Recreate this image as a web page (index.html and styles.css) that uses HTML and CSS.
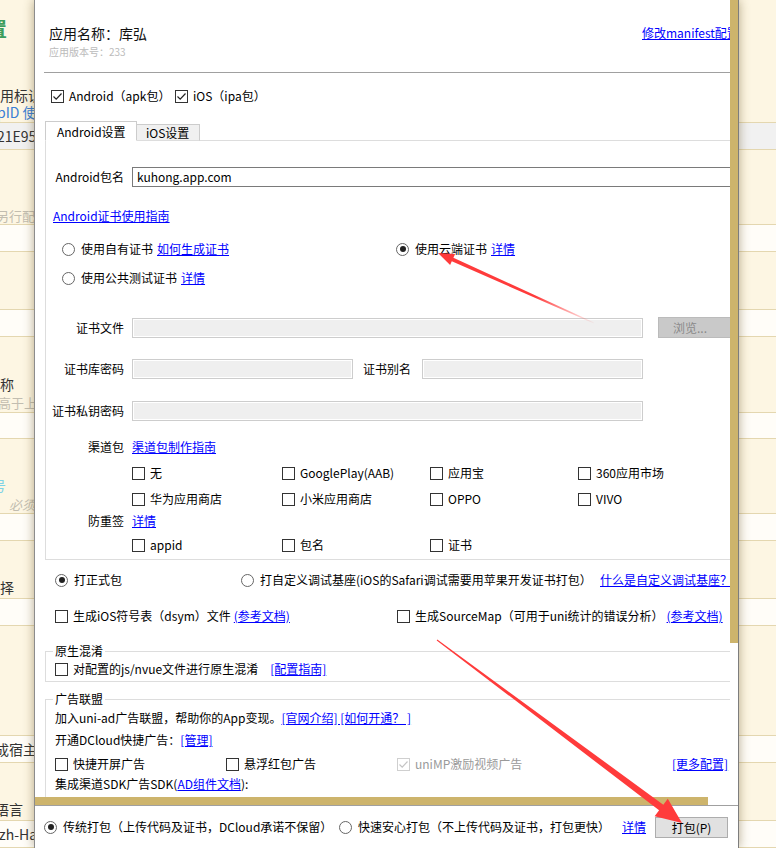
FILE: index.html
```html
<!DOCTYPE html>
<html lang="zh-CN">

<head>
  <meta charset="UTF-8">
  <meta name="viewport" content="width=device-width, initial-scale=1.0">
  <title>App云端打包</title>
  <link rel="stylesheet" href="styles.css">
</head>

<body>
  <!-- manifest page behind the dialog -->
  <div class="page">
    <h2 class="pg-title">置</h2>
    <p class="pg-text pg-appid">用标识</p>
    <p class="pg-text pg-use">pID 使用</p>
    <div class="pg-input pg-input-gray pg-in1">21E954</div>
    <p class="pg-hint pg-h1">另行配置</p>
    <div class="pg-input pg-in2"></div>
    <div class="pg-input pg-in3"></div>
    <p class="pg-text pg-name">称</p>
    <p class="pg-hint pg-h2">高于上</p>
    <div class="pg-input pg-in4"></div>
    <p class="pg-mark">号</p>
    <p class="pg-hint pg-h3">必须</p>
    <div class="pg-input pg-in5"></div>
    <p class="pg-text pg-pick">择</p>
    <div class="pg-input pg-in6"></div>
    <div class="pg-input pg-in7">成宿主</div>
    <p class="pg-text pg-lang">语言</p>
    <div class="pg-input pg-in8">zh-Hans</div>
  </div>

  <div class="dialog">
    <div class="dlg-body">
      <div class="dlg-view">
        <div class="content">
          <div class="app-head">
            <div>
              <div class="app-name">应用名称：库弘</div>
              <div class="app-ver">应用版本号：233</div>
            </div>
            <a href="#">修改manifest配置</a>
          </div>
          <div class="rule"></div>

          <div class="platforms">
            <label class="chk"><span class="box"><svg width="11" height="11" viewBox="0 0 11 11"><path d="M1.5 5.5 4.2 8.2 9.5 2.5" fill="none" stroke="#222" stroke-width="1.2"/></svg></span>Android（apk包）</label>
            <label class="chk"><span class="box"><svg width="11" height="11" viewBox="0 0 11 11"><path d="M1.5 5.5 4.2 8.2 9.5 2.5" fill="none" stroke="#222" stroke-width="1.2"/></svg></span>iOS（ipa包）</label>
          </div>

          <div class="tabs">
            <div class="tab active">Android设置</div>
            <div class="tab">iOS设置</div>
          </div>

          <div class="panel">
            <div class="frow r-pkg">
              <span class="flabel">Android包名</span>
              <div class="txt-input">kuhong.app.com</div>
            </div>

            <div class="r-guide"><a href="#">Android证书使用指南</a></div>

            <div class="r-cert">
              <div class="rad"><span class="radio"></span><span>使用自有证书</span><a href="#">如何生成证书</a></div>
              <div class="rad"><span class="radio on"></span><span>使用云端证书</span><a href="#">详情</a></div>
            </div>
            <div class="r-cert r-cert2">
              <div class="rad"><span class="radio"></span><span>使用公共测试证书</span><a href="#">详情</a></div>
            </div>

            <div class="frow r-file">
              <span class="flabel">证书文件</span>
              <div class="fcell">
                <div class="dis-input w-long"></div>
                <div class="browse">浏览...</div>
              </div>
            </div>
            <div class="frow r-pw">
              <span class="flabel">证书库密码</span>
              <div class="fcell">
                <div class="dis-input w-half"></div>
                <span class="alias-label">证书别名</span>
                <div class="dis-input w-half"></div>
              </div>
            </div>
            <div class="frow r-pw">
              <span class="flabel">证书私钥密码</span>
              <div class="fcell">
                <div class="dis-input w-long"></div>
              </div>
            </div>

            <div class="frow r-chan">
              <span class="flabel">渠道包</span>
              <div><a href="#">渠道包制作指南</a></div>
            </div>
            <div class="r-grid">
              <label class="chk"><span class="box"></span>无</label>
              <label class="chk"><span class="box"></span>GooglePlay(AAB)</label>
              <label class="chk"><span class="box"></span>应用宝</label>
              <label class="chk"><span class="box"></span>360应用市场</label>
            </div>
            <div class="r-grid">
              <label class="chk"><span class="box"></span>华为应用商店</label>
              <label class="chk"><span class="box"></span>小米应用商店</label>
              <label class="chk"><span class="box"></span>OPPO</label>
              <label class="chk"><span class="box"></span>VIVO</label>
            </div>

            <div class="frow r-sign">
              <span class="flabel">防重签</span>
              <div><a href="#">详情</a></div>
            </div>
            <div class="r-grid r-grid-last">
              <label class="chk"><span class="box"></span>appid</label>
              <label class="chk"><span class="box"></span>包名</label>
              <label class="chk"><span class="box"></span>证书</label>
            </div>
          </div>

          <div class="build">
            <div class="rad"><span class="radio on"></span><span>打正式包</span></div>
            <div class="rad"><span class="radio"></span><span>打自定义调试基座(iOS的Safari调试需要用苹果开发证书打包）</span></div>
            <a href="#">什么是自定义调试基座？</a>
          </div>

          <div class="extras">
            <div class="extra-item tight"><label class="chk"><span class="box"></span>生成iOS符号表（dsym）文件</label><a href="#">(参考文档)</a></div>
            <div class="extra-item tight"><label class="chk"><span class="box"></span>生成SourceMap（可用于uni统计的错误分析）</label><a href="#">(参考文档)</a></div>
          </div>

          <fieldset class="group fs-obf">
            <legend>原生混淆</legend>
            <div class="extra-item"><label class="chk"><span class="box"></span>对配置的js/nvue文件进行原生混淆</label><a href="#">[配置指南]</a></div>
          </fieldset>

          <fieldset class="group fs-ad">
            <legend>广告联盟</legend>
            <div class="ad-row">加入uni-ad广告联盟，帮助你的App变现。<a href="#">[官网介绍] [如何开通？ ]</a></div>
            <div class="ad-row ad-manage">开通DCloud快捷广告：<a href="#">[管理]</a></div>
            <div class="ad-row ad-opts">
              <label class="chk"><span class="box"></span>快捷开屏广告</label>
              <label class="chk"><span class="box"></span>悬浮红包广告</label>
              <label class="chk disabled"><span class="box"><svg width="11" height="11" viewBox="0 0 11 11"><path d="M1.5 5.5 4.2 8.2 9.5 2.5" fill="none" stroke="#c4c4c4" stroke-width="1.2"/></svg></span>uniMP激励视频广告</label>
              <a href="#">[更多配置]</a>
            </div>
            <div class="ad-row ad-sdk">集成渠道SDK广告SDK(<a href="#">AD组件文档</a>):</div>
          </fieldset>
        </div>
      </div>
      <div class="vbar"><div class="vbar-thumb"></div></div>
    </div>
    <div class="hbar"><div class="hbar-thumb"></div></div>

    <div class="dlg-foot">
      <div class="rad"><span class="radio on"></span><span>传统打包（上传代码及证书，DCloud承诺不保留）</span></div>
      <div class="rad"><span class="radio"></span><span>快速安心打包（不上传代码及证书，打包更快）</span></div>
      <a href="#">详情</a>
      <button class="pack-btn">打包(P)</button>
    </div>
  </div>

  <svg class="arrows" width="776" height="848" viewBox="0 0 776 848">
    <defs>
      <linearGradient id="fade1" gradientUnits="userSpaceOnUse" x1="596" y1="324" x2="535" y2="297">
        <stop offset="0" stop-color="#ff3b3b" stop-opacity="0" />
        <stop offset="1" stop-color="#ff3b3b" />
      </linearGradient>
    </defs>
    <polygon fill="url(#fade1)" points="594.2,322.6 453.4,257.7 455.1,254 438,253 450.1,265 451.8,261.3 593.8,323.4" />
    <polygon fill="#ff3b3b" points="437.3,639.6 663.3,804.7 667.8,798.7 682,823 654.6,816.3 659.1,810.3 436.7,640.4" />
  </svg>
</body>

</html>
```

FILE: styles.css
```css
* {
  box-sizing: border-box;
}

body {
  margin: 0;
  width: 776px;
  height: 848px;
  overflow: hidden;
  position: relative;
  background-color: #fdf6e3;
  font-family: "Noto Sans CJK SC", sans-serif;
  font-size: 12px;
  line-height: 16px;
  color: #000;
}

a {
  color: #0000ff;
  text-decoration: underline;
}

/* ---- page behind the dialog ---- */

.page > * {
  margin: 0;
  white-space: nowrap;
}

.pg-title {
  margin-top: 19px;
  height: 20px;
  font-size: 20px;
  line-height: 20px;
  font-weight: bold;
  color: #3c9d5d;
  text-indent: -13px;
}

.pg-text {
  height: 15px;
  font-size: 14px;
  line-height: 15px;
  color: #333;
}

.pg-hint {
  height: 13px;
  font-size: 13px;
  line-height: 13px;
  color: #c2bdb0;
}

.pg-input {
  height: 28px;
  border-top: 1px solid #e4d7b0;
  border-bottom: 1px solid #e4d7b0;
  background-color: #fffdf8;
  font-size: 14px;
  line-height: 26px;
  color: #333;
}

.pg-input-gray {
  background-color: #f1f1f1;
}

.pg-mark {
  height: 14px;
  font-size: 14px;
  line-height: 14px;
  color: #7fd3e6;
  text-indent: -8px;
}

.pg-appid { margin-top: 49px; }
.pg-use { margin-top: 2px; color: #3a7fd5; text-indent: -3px; }
.pg-in1 { margin-top: 2px; text-indent: -3px; }
.pg-h1 { margin-top: 59px; height: 14px; text-indent: -4px; }
.pg-in2 { margin-top: 1px; }
.pg-in3 { margin-top: 57px; }
.pg-name { margin-top: 40px; }
.pg-h2 { margin-top: 4px; text-indent: -2px; }
.pg-in4 { margin-top: 3px; height: 27px; }
.pg-mark { margin-top: 39px; }
.pg-h3 { margin-top: 6px; padding-left: 9px; font-style: italic; }
.pg-in5 { margin-top: 2px; }
.pg-pick { margin-top: 39px; }
.pg-in6 { margin-top: 3px; }
.pg-in7 { margin-top: 109px; text-indent: -5px; }
.pg-lang { margin-top: 39px; text-indent: -5px; }
.pg-in8 { margin-top: 3px; text-indent: -1px; }

/* ---- dialog ---- */

.dialog {
  position: absolute;
  top: 0;
  left: 34px;
  width: 705px;
  height: 848px;
  background-color: #fff;
  border-left: 1px solid #8c8c8c;
  border-right: 1px solid #7d7d7d;
  box-shadow: 0 0 10px rgba(90, 70, 20, 0.45);
  display: flex;
  flex-direction: column;
}

.dlg-body {
  display: flex;
  height: 797px;
}

.dlg-view {
  width: 695px;
  overflow: hidden;
}

.vbar {
  width: 8px;
  background-color: #fff;
}

.vbar-thumb {
  height: 643px;
  background-color: #cdb46c;
}

.hbar {
  height: 8px;
  background-color: #fff;
}

.hbar-thumb {
  width: 673px;
  height: 8px;
  background-color: #cdb46c;
}

.content {
  width: 760px;
  white-space: nowrap;
}

.app-head {
  display: grid;
  grid-template-columns: 593px auto;
  padding: 25px 0 0 14px;
}

.app-name {
  font-size: 14px;
  line-height: 16px;
  color: #111;
}

.app-ver {
  margin-top: 6px;
  font-size: 10px;
  line-height: 10px;
  color: #bbb;
}

.rule {
  margin: 15px 0 0 9px;
  height: 1px;
  background-color: #a0a0a0;
}

/* checkbox + radio */

.chk {
  display: flex;
  align-items: center;
  height: 16px;
}

.box {
  width: 13px;
  height: 13px;
  margin-right: 5px;
  border: 1px solid #333;
  background-color: #fff;
  display: flex;
  align-items: center;
  justify-content: center;
  flex: none;
}

.chk.disabled {
  color: #9a9a9a;
}

.chk.disabled .box {
  border-color: #cfcfcf;
}

.rad {
  display: flex;
  align-items: center;
  height: 16px;
}

.radio {
  width: 13px;
  height: 13px;
  margin-right: 6px;
  border: 1px solid #666;
  border-radius: 50%;
  background-color: #fff;
  display: flex;
  align-items: center;
  justify-content: center;
  flex: none;
}

.radio.on::after {
  content: "";
  width: 6px;
  height: 6px;
  border-radius: 50%;
  background-color: #222;
}

.rad a {
  margin-left: 4px;
}

.platforms {
  display: grid;
  grid-template-columns: 124px auto;
  margin-top: 15px;
  padding-left: 16px;
}

/* tabs */

.tabs {
  display: flex;
  align-items: flex-end;
  height: 20px;
  margin: 17px 0 -1px 10px;
  position: relative;
  z-index: 1;
}

.tab {
  height: 17px;
  width: 63px;
  padding-left: 9px;
  border: 1px solid #ccc;
  border-bottom-color: #ddd;
  border-left: none;
  background-color: #f0f0f0;
  line-height: 15px;
}

.tab.active {
  height: 20px;
  width: 92px;
  padding: 2px 0 0 11px;
  border-left: 1px solid #ccc;
  border-bottom-color: #fff;
  background-color: #fff;
}

.panel {
  margin-left: 10px;
  width: 750px;
  border: 1px solid #ddd;
  border-right: none;
  padding-bottom: 6px;
}

.frow {
  display: grid;
  grid-template-columns: 78px auto;
  column-gap: 8px;
  align-items: center;
  height: 16px;
}

.flabel {
  text-align: right;
}

.fcell {
  display: flex;
  align-items: center;
}

.r-pkg {
  margin-top: 26px;
  height: 20px;
}

.txt-input {
  height: 20px;
  width: 620px;
  padding-left: 4px;
  border: 1px solid #7a7a7a;
  border-right: none;
  line-height: 18px;
}

.r-guide {
  margin-top: 21px;
  padding-left: 7px;
  height: 16px;
}

.r-cert {
  display: grid;
  grid-template-columns: 334px auto;
  margin-top: 17px;
  padding-left: 16px;
}

.r-cert2 {
  margin-top: 13px;
}

.r-file {
  margin-top: 31px;
  height: 20px;
}

.r-pw {
  margin-top: 22px;
  height: 20px;
}

.dis-input {
  height: 20px;
  border: 1px solid #cdcdcd;
  background-color: #efefef;
  box-shadow: inset 0 0 0 1px #fff;
}

.w-long {
  width: 511px;
}

.w-half {
  width: 221px;
}

.alias-label {
  margin: 0 11px 0 10px;
}

.browse {
  margin-left: 15px;
  width: 80px;
  height: 21px;
  padding-left: 14px;
  border: 1px solid #bbb;
  background-color: #c9c9c9;
  color: #8a8a8a;
  line-height: 19px;
}

.r-chan {
  margin-top: 18px;
}

.r-grid {
  display: grid;
  grid-template-columns: 150px 148px 148px auto;
  margin-top: 10px;
  padding-left: 86px;
}

.r-sign {
  margin-top: 6px;
}

.r-grid-last {
  margin-top: 8px;
}

/* below the tab panel */

.build {
  display: grid;
  grid-template-columns: 186px 359px auto;
  align-items: center;
  height: 16px;
  margin-top: 12px;
  padding-left: 20px;
}

.extras {
  display: grid;
  grid-template-columns: 342px auto;
  margin-top: 20px;
  padding-left: 20px;
}

.extra-item {
  display: flex;
  align-items: center;
  height: 16px;
}

.extra-item a {
  margin-left: 12px;
}

.extra-item.tight a {
  margin-left: 3px;
}

.group {
  margin: 0 0 0 10px;
  width: 720px;
  min-width: 0;
  border: 1px solid #ddd;
  border-right: none;
  padding: 3px 0 4px 9px;
}

.group legend {
  margin-left: -2px;
  padding: 0 2px;
  line-height: 14px;
}

.fs-obf {
  margin-top: 20px;
}

.fs-ad {
  margin-top: 10px;
  padding-top: 4px;
  padding-bottom: 20px;
}

.ad-row {
  height: 16px;
  display: flex;
  align-items: center;
}

.ad-manage {
  margin-top: 6px;
}

.ad-opts {
  display: grid;
  grid-template-columns: 171px 171px 275px auto;
  margin-top: 8px;
}

.ad-sdk {
  margin-top: 4px;
}

/* footer */

.dlg-foot {
  height: 43px;
  border-top: 1px solid #a0a0a0;
  display: grid;
  grid-template-columns: 295px 283px 33px 73px;
  align-items: center;
  padding-left: 9px;
  white-space: nowrap;
}

.pack-btn {
  height: 21px;
  width: 73px;
  padding: 0;
  border: 1px solid #adadad;
  background-color: #e1e1e1;
  font-family: "Noto Sans CJK SC", sans-serif;
  font-size: 12px;
  color: #000;
}

.arrows {
  position: absolute;
  top: 0;
  left: 0;
  pointer-events: none;
}
```
